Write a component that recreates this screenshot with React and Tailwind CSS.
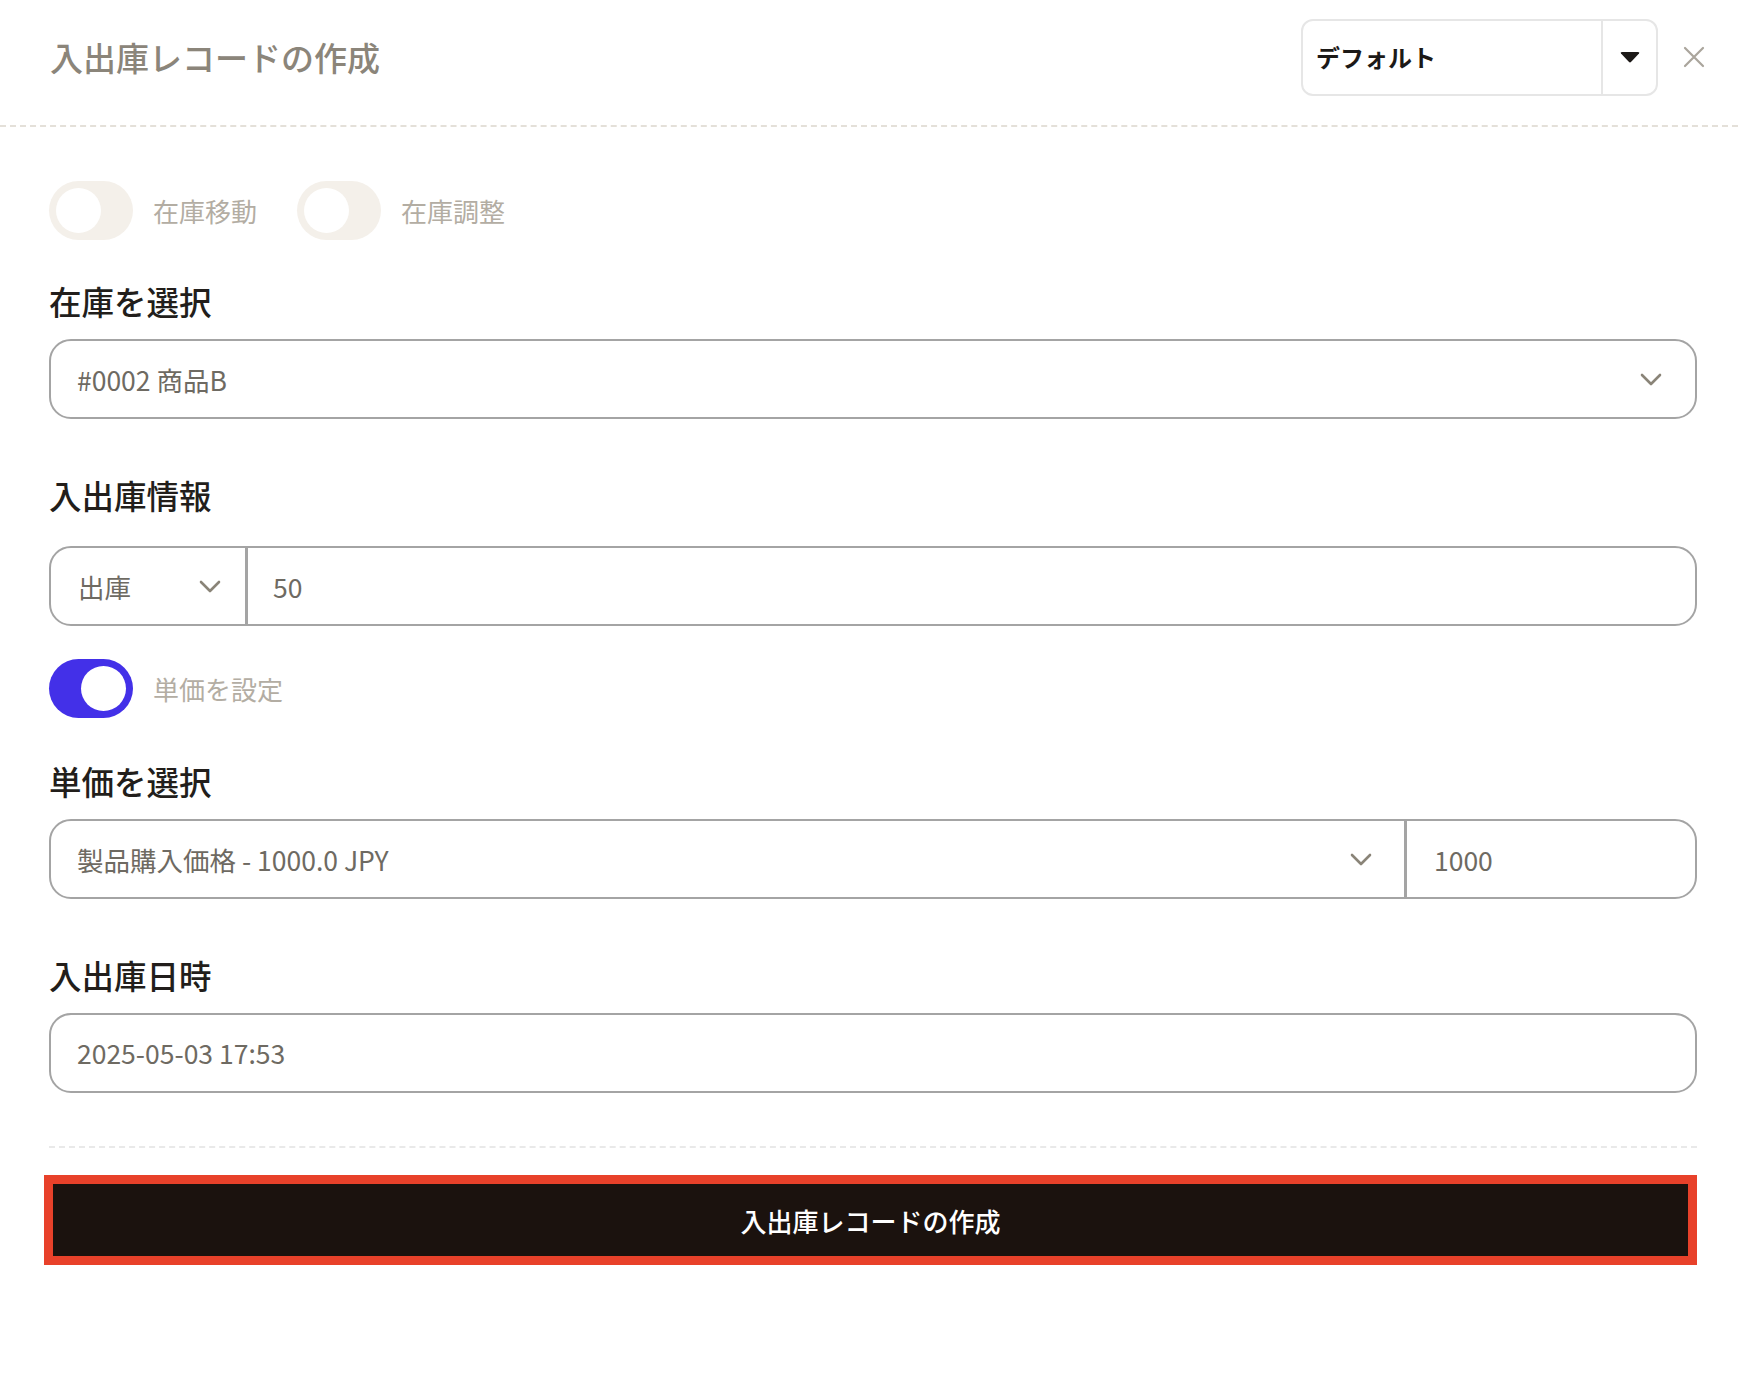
import { useState } from 'react';

function Chevron({ className }) {
  return (
    <svg width="22" height="13" viewBox="0 0 22 13" fill="none" className={className}>
      <polyline points="2,2 11,11 20,2" stroke="#8a8478" strokeWidth="2.6" strokeLinecap="round" strokeLinejoin="round" />
    </svg>
  );
}

function Toggle({ on, label, onChange }) {
  return (
    <button type="button" onClick={onChange} className="flex items-center">
      <span
        className={
          'relative block h-[59px] w-[84px] rounded-full ' + (on ? 'bg-[#4330e8]' : 'bg-[#f4f0ea]')
        }
      >
        <span
          className={
            'absolute top-[7px] block h-[45px] w-[45px] rounded-full bg-white ' +
            (on ? 'left-[32px]' : 'left-[7px]')
          }
        />
      </span>
      <span className="ml-[20px] text-[26px] leading-none text-[#b3ada3]">{label}</span>
    </button>
  );
}

function Heading({ children, className }) {
  return (
    <h2 className={'text-[32.5px] font-medium leading-[40px] text-[#221e1b] ' + (className || '')}>
      {children}
    </h2>
  );
}

export default function App() {
  const [transfer, setTransfer] = useState(false);
  const [adjust, setAdjust] = useState(false);
  const [unitPrice, setUnitPrice] = useState(true);

  return (
    <div className="min-h-[1390px] w-full bg-white font-['Noto_Sans_CJK_JP','Noto_Sans',sans-serif]">
      <header className="flex h-[127px] items-center justify-between border-b-2 border-dashed border-[#e4e0d9] pb-[11px] pl-[50px] pr-[32px]">
        <h1 className="text-[33px] font-medium leading-none text-[#8b857a]">入出庫レコードの作成</h1>
        <div className="flex items-center gap-[24px]">
          <div className="flex h-[77px] w-[357px] rounded-[12px] border-2 border-[#e6e6e6]">
            <div className="flex flex-1 items-center pl-[13px] text-[24px] font-bold text-[#1c1917]">
              デフォルト
            </div>
            <div className="flex w-[55px] items-center justify-center border-l-2 border-[#e6e6e6]">
              <svg width="20" height="11" viewBox="0 0 20 11">
                <path d="M1 1.5 Q0 0 2 0 H18 Q20 0 19 1.5 L11.2 9.8 Q10 11 8.8 9.8 Z" fill="#1c1917" />
              </svg>
            </div>
          </div>
          <button type="button" className="flex h-[24px] w-[24px] items-center justify-center">
            <svg width="22" height="22" viewBox="0 0 22 22">
              <path d="M2 2 L20 20 M20 2 L2 20" stroke="#aaa59c" strokeWidth="2.2" strokeLinecap="round" />
            </svg>
          </button>
        </div>
      </header>

      <main className="pl-[49px] pr-[41px]">
        <div className="mt-[54px] flex items-center gap-[40px]">
          <Toggle on={transfer} label="在庫移動" onChange={() => setTransfer(!transfer)} />
          <Toggle on={adjust} label="在庫調整" onChange={() => setAdjust(!adjust)} />
        </div>

        <Heading className="mt-[41px]">在庫を選択</Heading>
        <div className="mt-[18px] flex h-[80px] items-center justify-between rounded-[22px] border-2 border-[#a4a4a4] pl-[26px] pr-[33px]">
          <span className="pt-[2px] text-[26.5px] text-[#6e6a62]">#0002 商品B</span>
          <Chevron />
        </div>

        <Heading className="mt-[56px]">入出庫情報</Heading>
        <div className="mt-[31px] flex h-[80px] rounded-[22px] border-2 border-[#a4a4a4]">
          <div className="flex w-[197px] items-center justify-between border-r-[3px] border-[#a4a4a4] pl-[27px] pr-[24px]">
            <span className="pt-[2px] text-[26.5px] text-[#6e6a62]">出庫</span>
            <Chevron />
          </div>
          <div className="flex flex-1 items-center pl-[25px] pt-[2px] text-[26.5px] text-[#6e6a62]">50</div>
        </div>

        <div className="mt-[33px]">
          <Toggle on={unitPrice} label="単価を設定" onChange={() => setUnitPrice(!unitPrice)} />
        </div>

        <Heading className="mt-[43px]">単価を選択</Heading>
        <div className="mt-[18px] flex h-[80px] rounded-[22px] border-2 border-[#a4a4a4]">
          <div className="flex w-[1356px] items-center justify-between border-r-[3px] border-[#a4a4a4] pl-[26px] pr-[32px]">
            <span className="pt-[2px] text-[26.5px] text-[#6e6a62]">製品購入価格 - 1000.0 JPY</span>
            <Chevron />
          </div>
          <div className="flex flex-1 items-center pl-[27px] pt-[2px] text-[26.5px] text-[#6e6a62]">1000</div>
        </div>

        <Heading className="mt-[56px]">入出庫日時</Heading>
        <div className="mt-[18px] flex h-[80px] items-center rounded-[22px] border-2 border-[#a4a4a4] pl-[26px]">
          <span className="text-[26.5px] text-[#6e6a62]">2025-05-03 17:53</span>
        </div>

        <div className="mt-[53px] border-t-2 border-dashed border-[#e9e9e9]" />

        <div className="ml-[-5px] mt-[27px] border-[9px] border-[#e8412a]">
          <button
            type="button"
            className="flex h-[72px] w-full items-center justify-center bg-[#1b120e] text-[26px] font-medium text-white"
          >
            入出庫レコードの作成
          </button>
        </div>
      </main>
    </div>
  );
}
